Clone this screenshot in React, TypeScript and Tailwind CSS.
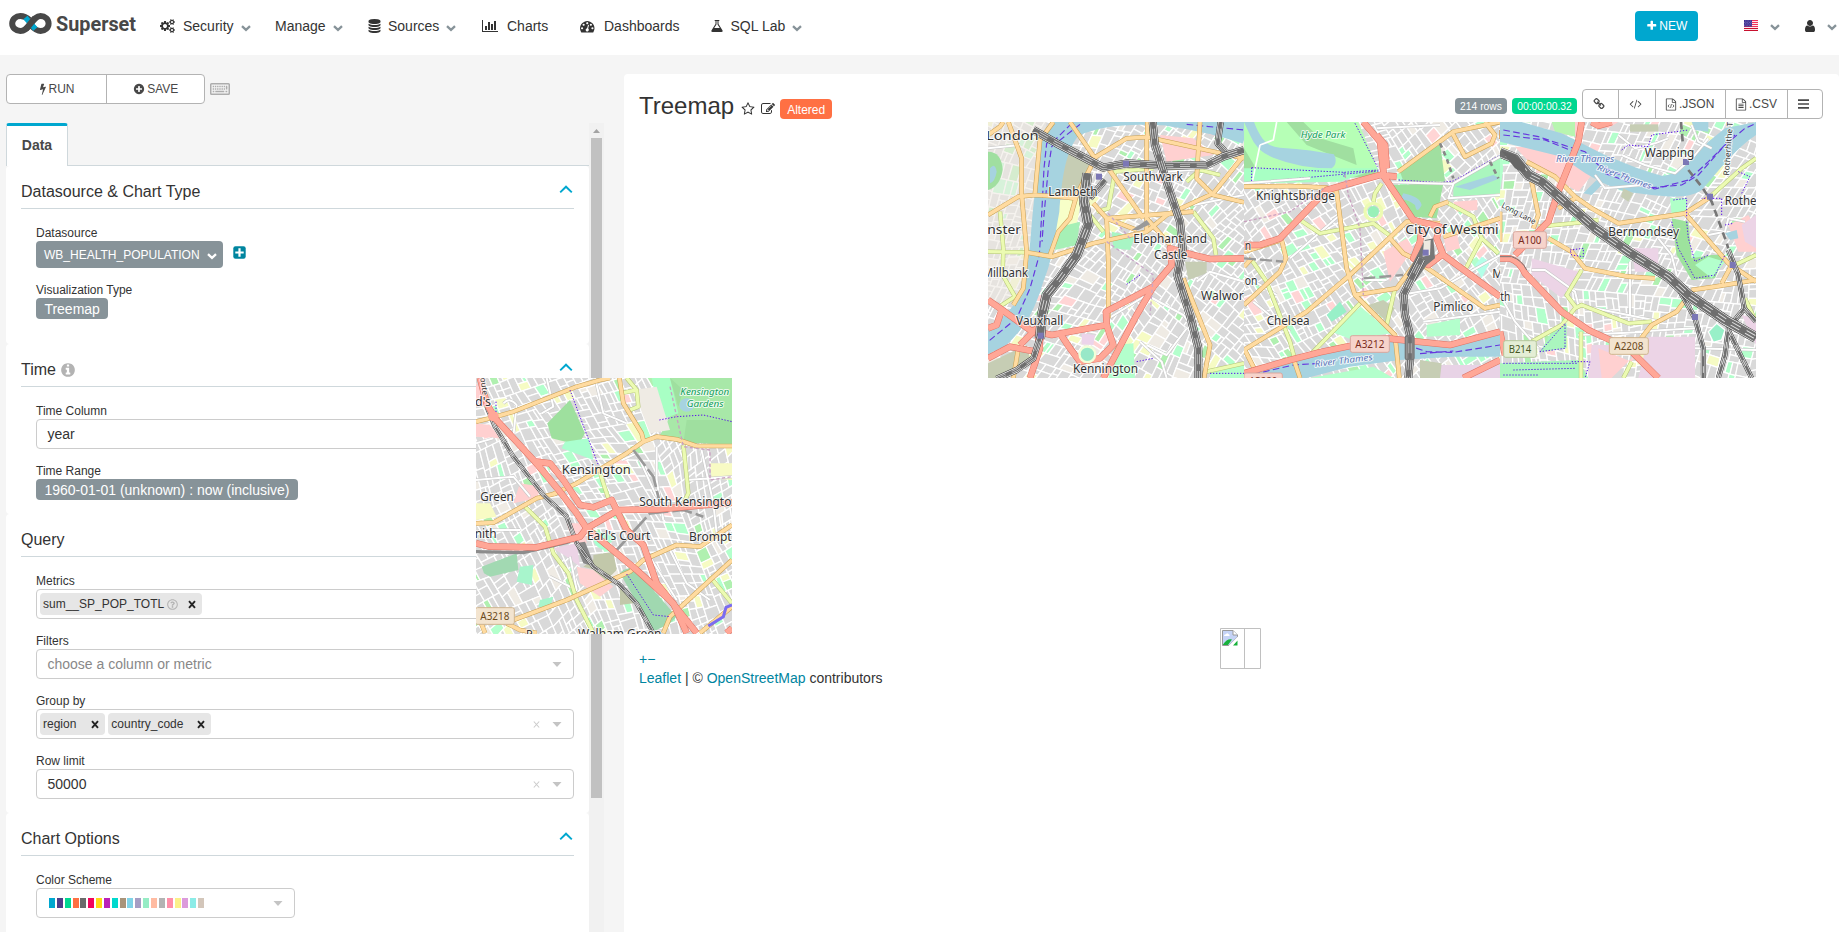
import React from "react";
import { FaRegQuestionCircle } from "react-icons/fa";

/* ---------- icons ---------- */

const PATHS = {
  cogs: "M896 896q0-106-75-181t-181-75-181 75-75 181 75 181 181 75 181-75 75-181zm768 512q0-52-38-90t-90-38-90 38-38 90q0 53 37.5 90.5t90.5 37.5 90.5-37.5 37.5-90.5zm0-1024q0-52-38-90t-90-38-90 38-38 90q0 53 37.5 90.5t90.5 37.5 90.5-37.5 37.5-90.5zm-384 421v185q0 10-7 19.5t-16 10.5l-155 24q-11 35-32 76 34 48 90 115 7 11 7 20 0 12-7 19-23 30-82.5 89.5t-78.5 59.5q-11 0-21-7l-115-90q-37 19-77 31-11 108-23 155-7 24-30 24h-186q-11 0-20-7.5t-10-17.5l-23-153q-34-10-75-31l-118 89q-7 7-20 7-11 0-21-8-144-133-144-160 0-9 7-19 10-14 41-53t47-61q-23-44-35-82l-152-24q-10-1-17-9.5t-7-19.5v-185q0-10 7-19.5t16-10.5l155-24q11-35 32-76-34-48-90-115-7-11-7-20 0-12 7-20 22-30 82-89t79-59q11 0 21 7l115 90q34-18 77-32 11-108 23-154 7-24 30-24h186q11 0 20 7.5t10 17.5l23 153q34 10 75 31l118-89q8-7 20-7 11 0 21 8 144 133 144 160 0 8-7 19-12 16-42 54t-45 60q23 48 34 82l152 23q10 2 17 10.5t7 19.5zm640 533v140q0 16-149 31-12 27-30 52 51 113 51 138 0 4-4 7-122 71-124 71-8 0-46-47t-52-68q-20 2-30 2t-30-2q-14 21-52 68t-46 47q-2 0-124-71-4-3-4-7 0-25 51-138-18-25-30-52-149-15-149-31v-140q0-16 149-31 13-29 30-52-51-113-51-138 0-4 4-7 4-2 35-20t59-34 30-16q8 0 46 46.5t52 67.5q20-2 30-2t30 2q51-71 92-112l6-2q4 0 124 70 4 3 4 7 0 25-51 138 17 23 30 52 149 15 149 31zm0-1024v140q0 16-149 31-12 27-30 52 51 113 51 138 0 4-4 7-122 71-124 71-8 0-46-47t-52-68q-20 2-30 2t-30-2q-14 21-52 68t-46 47q-2 0-124-71-4-3-4-7 0-25 51-138-18-25-30-52-149-15-149-31v-140q0-16 149-31 13-29 30-52-51-113-51-138 0-4 4-7 4-2 35-20t59-34 30-16q8 0 46 46.5t52 67.5q20-2 30-2t30 2q51-71 92-112l6-2q4 0 124 70 4 3 4 7 0 25-51 138 17 23 30 52 149 15 149 31z",
  database: "M832 768q237 0 443-43t325-127v170q0 69-103 128t-280 93.5-385 34.5-385-34.5-280-93.5-103-128v-170q119 84 325 127t443 43zm0 768q237 0 443-43t325-127v170q0 69-103 128t-280 93.5-385 34.5-385-34.5-280-93.5-103-128v-170q119 84 325 127t443 43zm0-384q237 0 443-43t325-127v170q0 69-103 128t-280 93.5-385 34.5-385-34.5-280-93.5-103-128v-170q119 84 325 127t443 43zm0-1152q208 0 385 34.5t280 93.5 103 128v128q0 69-103 128t-280 93.5-385 34.5-385-34.5-280-93.5-103-128v-128q0-69 103-128t280-93.5 385-34.5z",
  chart: "M640 896v512h-256v-512h256zm384-512v1024h-256v-1024h256zm1024 1152v128h-2048v-1536h128v1408h1920zm-640-896v768h-256v-768h256zm384-384v1152h-256v-1152h256z",
  gauge: "M384 1152q0-53-37.5-90.5t-90.5-37.5-90.5 37.5-37.5 90.5 37.5 90.5 90.5 37.5 90.5-37.5 37.5-90.5zm192-448q0-53-37.5-90.5t-90.5-37.5-90.5 37.5-37.5 90.5 37.5 90.5 90.5 37.5 90.5-37.5 37.5-90.5zm428 481l101-382q6-26-7.5-48.5t-38.5-29.5-48 6.5-30 39.5l-101 382q-60 5-107 43.5t-63 98.5q-20 77 20 146t117 89 146-20 89-117q16-60-6-117t-72-91zm660-33q0-53-37.5-90.5t-90.5-37.5-90.5 37.5-37.5 90.5 37.5 90.5 90.5 37.5 90.5-37.5 37.5-90.5zm-640-640q0-53-37.5-90.5t-90.5-37.5-90.5 37.5-37.5 90.5 37.5 90.5 90.5 37.5 90.5-37.5 37.5-90.5zm448 192q0-53-37.5-90.5t-90.5-37.5-90.5 37.5-37.5 90.5 37.5 90.5 90.5 37.5 90.5-37.5 37.5-90.5zm320 448q0 261-141 483-19 29-54 29h-1402q-35 0-54-29-141-221-141-483 0-182 71-348t191-286 286-191 348-71 348 71 286 191 191 286 71 348z",
  flask: "M1591 1448q56 89 21.5 152.5t-140.5 63.5h-1152q-106 0-140.5-63.5t21.5-152.5l503-793v-399h-64q-26 0-45-19t-19-45 19-45 45-19h512q26 0 45 19t19 45-19 45-45 19h-64v399zm-779-725l-272 429h712l-272-429-20-31v-436h-128v436z",
  star: "M1201 1004l306-297-422-62-189-382-189 382-422 62 306 297-73 421 378-199 377 199zm527-357q0 22-26 48l-363 354 86 500q1 7 1 20 0 50-41 50-19 0-40-12l-449-236-449 236q-22 12-40 12-21 0-31.5-14.5t-10.5-35.5q0-6 2-20l86-500-364-354q-25-27-25-48 0-37 56-46l502-73 225-455q19-41 49-41t49 41l225 455 502 73q56 9 56 46z",
  edit: "M888 1184l116-116-152-152-116 116v56h96v96h56zm440-720q-16-16-33 1l-350 350q-17 17-1 33t33-1l350-350q17-17 1-33zm80 594v190q0 119-84.5 203.5t-203.5 84.5h-832q-119 0-203.5-84.5t-84.5-203.5v-832q0-119 84.5-203.5t203.5-84.5h832q63 0 117 25 15 7 18 23 3 17-9 29l-49 49q-14 14-32 8-23-6-45-6h-832q-66 0-113 47t-47 113v832q0 66 47 113t113 47h832q66 0 113-47t47-113v-126q0-13 9-22l64-64q15-15 35-7t20 29zm-96-738l288 288-672 672h-288v-288zm444 132l-92 92-288-288 92-92q28-28 68-28t68 28l152 152q28 28 28 68t-28 68z",
  bolt: "M1333 566q18 20 7 44l-540 1157q-13 25-42 25-4 0-14-2-17-5-25.5-19t-4.5-30l197-808-406 101q-4 1-12 1-18 0-31-11-18-15-13-39l201-825q4-14 16-23t28-9h328q19 0 32 12.5t13 29.5q0 8-5 18l-171 463 396-98q8-2 12-2 19 0 34 15z",
  plusCircle: "M1344 960v-128q0-26-19-45t-45-19h-256v-256q0-26-19-45t-45-19h-128q-26 0-45 19t-19 45v256h-256q-26 0-45 19t-19 45v128q0 26 19 45t45 19h256v256q0 26 19 45t45 19h128q26 0 45-19t19-45v-256h256q26 0 45-19t19-45zm320-64q0 209-103 385.5t-279.5 279.5-385.5 103-385.5-103-279.5-279.5-103-385.5 103-385.5 279.5-279.5 385.5-103 385.5 103 279.5 279.5 103 385.5z",
  plus: "M1600 736v192q0 40-28 68t-68 28h-416v416q0 40-28 68t-68 28h-192q-40 0-68-28t-28-68v-416h-416q-40 0-68-28t-28-68v-192q0-40 28-68t68-28h416v-416q0-40 28-68t68-28h192q40 0 68 28t28 68v416h416q40 0 68 28t28 68z",
  info: "M1152 1376v-160q0-14-9-23t-23-9h-96v-512q0-14-9-23t-23-9h-320q-14 0-23 9t-9 23v160q0 14 9 23t23 9h96v320h-96q-14 0-23 9t-9 23v160q0 14 9 23t23 9h448q14 0 23-9t9-23zm-128-896v-160q0-14-9-23t-23-9h-192q-14 0-23 9t-9 23v160q0 14 9 23t23 9h192q14 0 23-9t9-23zm640 416q0 209-103 385.5t-279.5 279.5-385.5 103-385.5-103-279.5-279.5-103-385.5 103-385.5 279.5-279.5 385.5-103 385.5 103 279.5 279.5 103 385.5z",
  code: "M681 1399l-50 50q-10 10-23 10t-23-10l-466-466q-10-10-10-23t10-23l466-466q10-10 23-10t23 10l50 50q10 10 10 23t-10 23l-393 393 393 393q10 10 10 23t-10 23zm591-1067l-373 1291q-4 13-15.5 19.5t-23.5 2.5l-62-17q-13-4-19.5-15.5t-2.5-24.5l373-1291q4-13 15.5-19.5t23.5-2.5l62 17q13 4 19.5 15.5t2.5 24.5zm657 651l-466 466q-10 10-23 10t-23-10l-50-50q-10-10-10-23t10-23l393-393-393-393q-10-10-10-23t10-23l50-50q10-10 23-10t23 10l466 466q10 10 10 23t-10 23z",
  user: "M1536 1399q0 109-62.5 187t-150.5 78h-854q-88 0-150.5-78t-62.5-187q0-85 8.5-160.5t31.5-152 58.5-131 94-89 134.5-34.5q131 128 313 128t313-128q76 0 134.5 34.5t94 89 58.5 131 31.5 152 8.5 160.5zm-256-887q0 159-112.5 271.5t-271.5 112.5-271.5-112.5-112.5-271.5 112.5-271.5 271.5-112.5 271.5 112.5 112.5 271.5z",
  link: "M1520 1216q0-40-28-68l-208-208q-28-28-68-28-42 0-72 32 3 3 19 18.5t21.5 21.5 15 19 13 25.5 3.5 27.5q0 40-28 68t-68 28q-15 0-27.5-3.5t-25.5-13-19-15-21.5-21.5-18.5-19q-33 31-33 73 0 40 28 68l206 207q27 27 68 27 40 0 68-26l147-146q28-28 28-67zm-703-705q0-40-28-68l-206-207q-28-28-68-28-39 0-68 27l-147 146q-28 28-28 67 0 40 28 68l208 208q27 27 68 27 42 0 72-31-3-3-19-18.5t-21.5-21.5-15-19-13-25.5-3.5-27.5q0-40 28-68t68-28q15 0 27.5 3.5t25.5 13 19 15 21.5 21.5 18.5 19q33-31 33-73zm895 705q0 120-85 203l-147 146q-83 83-203 83-121 0-204-85l-206-207q-83-83-83-203 0-123 88-209l-88-88q-86 88-208 88-120 0-204-84l-208-208q-84-84-84-204t85-203l147-146q83-83 203-83 121 0 204 85l206 207q83 83 83 203 0 123-88 209l88 88q86-88 208-88 120 0 204 84l208 208q84 84 84 204z",
  file: "M1596 380q28 28 48 76t20 88v1152q0 40-28 68t-68 28h-1344q-40 0-68-28t-28-68v-1600q0-40 28-68t68-28h896q40 0 88 20t76 48zm-444-244v376h376q-10-29-22-41l-313-313q-12-12-41-22zm384 1528v-1024h-416q-40 0-68-28t-28-68v-416h-768v1536h1280z",
};

function Icon({ name, size, w = 1792, className = "" }: { name: keyof typeof PATHS; size: number; w?: number; className?: string }) {
  return (
    <svg width={(size * w) / 1792} height={size} viewBox={`0 0 ${w} 1792`} fill="currentColor" className={`shrink-0 ${className}`}>
      <path d={PATHS[name]} />
    </svg>
  );
}

const Caret = ({ className = "" }: { className?: string }) => (
  <svg width="10" height="7" viewBox="0 0 10 7" className={`shrink-0 ${className}`}>
    <path d="M1 1.2L5 4.9L9 1.2" fill="none" stroke="currentColor" strokeWidth="2.3" />
  </svg>
);

const Arrow = ({ className = "" }: { className?: string }) => (
  <svg width="10" height="5" viewBox="0 0 10 5" className={`shrink-0 ${className}`}>
    <path d="M0.5 0H9.5L5 5Z" fill="#c4c4c4" />
  </svg>
);

const FileIcon = ({ code }: { code?: boolean }) => (
  <svg width="12" height="13" viewBox="0 0 1792 1792" fill="currentColor" className="shrink-0">
    <path d={PATHS.file} />
    {code ? (
      <path d="M640 900L450 1120L640 1340M1152 900L1342 1120L1152 1340M960 830L832 1410" fill="none" stroke="currentColor" strokeWidth="120" />
    ) : (
      <path d="M512 770h768v120h-768zM512 1025h768v120h-768zM512 1280h768v120h-768z" />
    )}
  </svg>
);

const Keyboard = () => (
  <svg width="20" height="12" viewBox="0 0 20 12" className="shrink-0">
    <rect x="0.75" y="0.75" width="18.5" height="10.5" rx="0.8" fill="#f5f5f5" stroke="#adadad" strokeWidth="1.5" />
    <path d="M2.7 3.5H17.3M2.7 5.9H15" stroke="#adadad" strokeWidth="1.5" strokeDasharray="1.4 0.8" />
    <path d="M2.7 8.5H4.3M5.3 8.5H14.3M15.5 8.5H17.3M16.6 4V6.6" stroke="#adadad" strokeWidth="1.5" />
  </svg>
);

const Flag = () => (
  <svg width="14" height="11" viewBox="0 0 14 11" className="shrink-0">
    <rect width="14" height="11" fill="#fff" />
    {[0, 2, 4, 6, 8, 10].map((y) => (
      <rect key={y} y={y} width="14" height="1.1" fill={y > 6 ? "#c8102e" : "#f0305a"} />
    ))}
    <rect width="8" height="6.6" fill="#3c2f91" />
    <path d="M1 1H8M0 2.4H8M1 3.8H8M0 5.2H8" stroke="#a9a2d8" strokeWidth="0.6" strokeDasharray="0.8 0.9" />
  </svg>
);

const Logo = () => (
  <svg width="130" height="30" viewBox="0 0 130 30" className="shrink-0">
    <g fill="none" strokeWidth="6">
      <path d="M20.5 10C17 6.6 14 6 11.3 6C6.8 6 3.2 9.3 3.2 13.5S6.8 21 11.3 21C15.8 21 18 18.2 21.2 14.5" stroke="#484848" />
      <path d="M21.2 14.5C24.6 10 27 6 31.6 6C36 6 39.6 9.3 39.6 13.5S36 21 31.6 21C28 21 25 18.6 21.8 15.2" stroke="#484848" />
      <path d="M16.4 7.4L26.4 19" stroke="#00a7cf" strokeWidth="5.4" />
      <path d="M17 19L26 8" stroke="#484848" />
    </g>
    <text x="47" y="21" fontFamily="Roboto, 'Liberation Sans', sans-serif" fontWeight="700" fontSize="20.5" textLength="80" lengthAdjust="spacingAndGlyphs" fill="#484848">
      Superset
    </text>
  </svg>
);

/* ---------- street map tiles ---------- */

type Pt = [number, number];

function random(seed: number) {
  let s = seed;
  return () => {
    s = (s * 1664525 + 1013904223) % 4294967296;
    return s / 4294967296;
  };
}

const area = (p: Pt[]) =>
  Math.abs(p.reduce((t, a, i) => { const b = p[(i + 1) % p.length]; return t + a[0] * b[1] - b[0] * a[1]; }, 0)) / 2;

/* Splits a quad into irregular city blocks by cutting its longer pair of sides. */
function splitBlocks(q: Pt[], rnd: () => number, out: Pt[][]) {
  const size = area(q);
  if (size < 550 + rnd() * 1400) {
    out.push(q);
    return;
  }
  const len = (a: Pt, b: Pt) => Math.hypot(a[0] - b[0], a[1] - b[1]);
  const mix = (a: Pt, b: Pt, t: number): Pt => [a[0] + (b[0] - a[0]) * t, a[1] + (b[1] - a[1]) * t];
  const [a, b, c, d] = q;
  const wide = len(a, b) + len(c, d) > (len(b, c) + len(d, a)) * (0.55 + rnd() * 0.5);
  const t = 0.34 + rnd() * 0.32;
  const skew = size > 20000 ? 0.34 : 0.08;
  const u = t + (rnd() - 0.5) * skew;
  if (wide) {
    const m = mix(a, b, t), n = mix(d, c, u);
    splitBlocks([a, m, n, d], rnd, out);
    splitBlocks([m, b, c, n], rnd, out);
  } else {
    const m = mix(b, c, t), n = mix(a, d, u);
    splitBlocks([a, b, m, n], rnd, out);
    splitBlocks([n, m, c, d], rnd, out);
  }
}

function Blocks({ seed, angle }: { seed: number; angle: number }) {
  const rnd = random(seed);
  const out: Pt[][] = [];
  splitBlocks([[-170, -170], [960, -170], [960, 960], [-170, 960]], rnd, out);
  const fills = out.map(() => {
    const r = rnd();
    return r < 0.06 ? "#b3ffcc" : r < 0.1 ? "#f6fbc4" : r < 0.12 ? "#ffd5d5" : r < 0.15 ? "#b0f0b0" : r < 0.21 ? "#efebe4" : "#d9d9d9";
  });
  return (
    <g transform={`rotate(${angle} 400 400)`} stroke="#fff" strokeWidth="3.8">
      {out.map((p, i) => (
        <polygon key={i} points={p.map((v) => `${v[0].toFixed(1)},${v[1].toFixed(1)}`).join(" ")} fill={fills[i]} />
      ))}
    </g>
  );
}

type RoadKind = "red" | "orange" | "yellow" | "white";
const ROAD: Record<RoadKind, { edge: string; fill: string; w: number }> = {
  white: { edge: "#c4c4c4", fill: "#ffffff", w: 6 },
  yellow: { edge: "#b3c475", fill: "#ecfbb2", w: 10 },
  orange: { edge: "#c9a052", fill: "#ffdba0", w: 11 },
  red: { edge: "#dd6f62", fill: "#ffa797", w: 17 },
};

function Roads({ kind, lines }: { kind: RoadKind; lines: string[] }) {
  const r = ROAD[kind];
  return (
    <g fill="none" strokeLinejoin="round">
      {lines.map((d, i) => <path key={i} d={d} stroke={r.edge} strokeWidth={r.w + 3} />)}
      {lines.map((d, i) => <path key={i} d={d} stroke={r.fill} strokeWidth={r.w} />)}
    </g>
  );
}

function Rails({ lines, w = 22 }: { lines: string[]; w?: number }) {
  return (
    <g fill="none" strokeLinejoin="round">
      {lines.map((d, i) => (
        <g key={i}>
          <path d={d} stroke="#333" strokeWidth={w + 2} />
          <path d={d} stroke="#f2f2f2" strokeWidth={w - 1} />
          <path d={d} stroke="#6e6e6e" strokeWidth={w - 5} />
          {w > 14 && <path d={d} stroke="#e0e0e0" strokeWidth={w * 0.4} />}
          {w > 14 && <path d={d} stroke="#6e6e6e" strokeWidth={w * 0.22} />}
          <path d={d} stroke={w > 14 ? "#6e6e6e" : "#ddd"} strokeWidth={w > 14 ? w * 0.5 : 3} strokeDasharray="20 30" />
        </g>
      ))}
    </g>
  );
}

const Dots = ({ d, w = 3 }: { d: string; w?: number }) => (
  <path d={d} fill="none" stroke="#5b12ea" strokeWidth={w} strokeDasharray="4 5" />
);

const Ferry = ({ d }: { d: string }) => (
  <path d={d} fill="none" stroke="#6636dd" strokeWidth="3.5" strokeDasharray="20 10" />
);

function Name({ x, y, w, s = 36, children, fill = "#333", italic = false, transform }: { x: number; y: number; w: number; s?: number; children: string; fill?: string; italic?: boolean; transform?: string }) {
  return (
    <text x={x} y={y} textLength={w} lengthAdjust="spacingAndGlyphs" fontSize={s} fill={fill} stroke="#fff" strokeOpacity="0.75" strokeWidth="6" strokeLinejoin="round" paintOrder="stroke" fontStyle={italic ? "italic" : "normal"} transform={transform}>
      {children}
    </text>
  );
}

function Shield({ x, y, w, children, bg, edge, ink }: { x: number; y: number; w: number; children: string; bg: string; edge: string; ink: string }) {
  return (
    <g>
      <rect x={x} y={y} width={w} height="50" rx="6" fill={bg} stroke={edge} strokeWidth="3" />
      <text x={x + 15} y={y + 36} textLength={w - 30} lengthAdjust="spacingAndGlyphs" fontSize="31" fill={ink}>{children}</text>
    </g>
  );
}

function Tile({ box, className, children }: { box: string; className: string; children: React.ReactNode }) {
  return (
    <svg width="256" height="256" viewBox={box} fontFamily="'Noto Sans', sans-serif" className={`absolute overflow-hidden ${className}`}>
      <rect width="900" height="900" fill="#dcdcdc" />
      {children}
    </svg>
  );
}

const Stations = ({ at }: { at: Pt[] }) => (
  <g fill="#7b77b5">{at.map(([x, y]) => <rect key={`${x}-${y}`} x={x - 9} y={y - 9} width="18" height="18" />)}</g>
);

const LambethTile = () => (
  <Tile box="24 21 768 768" className="left-[364px] top-[48px]">
    <Blocks seed={11} angle={24} />
    <path d="M24 21H200L170 200L150 400L120 560L24 560Z" fill="#eeeae2" opacity="0.6" />
    <path d="M24 110Q65 110 68 165Q60 215 24 225Z" fill="#a0dfa0" />
    <path d="M30 160Q45 140 50 170Q45 200 30 205Z" fill="#a6d3e0" />
    <path d="M270 90L330 130L310 240L240 255L235 150Z" fill="#c6cdb4" />
    <path d="M240 255L305 250L290 330L220 350Z" fill="#f7ffc8" />
    <path d="M240 335L300 320L290 390L225 405Z" fill="#a6f0b6" />
    <path d="M395 350L465 365L450 405L400 400Z" fill="#a8f5c4" />
    <path d="M540 60L640 70L700 120L560 140ZM640 21L792 21V70L690 60Z" fill="#ffd0d0" />
    <path d="M615 440L680 440L680 475L625 495Z" fill="#c6cdb4" />
    <path d="M405 690L460 685L465 789H385Z" fill="#b3ffcc" />
    <path d="M690 765L792 740V789H690Z" fill="#b3ffcc" />
    <path d="M305 655L345 660L340 690L305 688Z" fill="#ecd4ea" />
    <path d="M24 745L140 690L150 730L70 789H24Z" fill="#c6cdb4" />
    <path d="M215 21L792 21L792 75Q700 34 520 30Q380 24 295 62C255 110 245 200 238 290C218 400 218 430 190 500C160 600 130 640 80 690L24 718V640C90 590 112 570 132 500C152 430 152 330 165 230C172 130 180 70 215 21Z" fill="#a6d3e0" />
    <path d="M560 21Q690 40 792 75" stroke="#a6d3e0" strokeWidth="22" fill="none" />
    <Ferry d="M275 25L230 70L200 85L192 160L185 300L178 420L150 520L110 610L24 680" />
    <Ferry d="M300 28L215 95L205 160L192 300L186 380M620 28L792 45" />
    <Roads kind="white" lines={["M370 620L500 540L610 600L640 640M500 690L560 720L620 640M650 500L690 470L792 500M480 680L545 740L560 789M24 100L120 90M560 170L700 160M640 270L792 240"]} />
    <Roads kind="yellow" lines={["M24 410L140 412M60 290L70 400L68 480L105 545L50 580M350 290L385 280L405 170L520 160M640 290L700 370L708 420M792 745L680 770M620 200L660 165L720 180M370 350L330 300"]} />
    <Roads kind="orange" lines={[
      "M85 21L125 130V240L140 410L130 520L100 570", "M220 21L180 75L165 235", "M24 300L115 245L165 240L240 245L285 250", "M270 21L345 130L290 240L270 310L235 350L210 420",
      "M140 412L215 425L340 385L500 350L560 300L700 235L792 120", "M340 130L440 70L500 66L792 130", "M502 66V21M500 66V350", "M385 160L490 310", "M340 265L380 310L640 290", "M380 310L385 440V610",
      "M500 310L570 390M660 21L650 190L700 240L792 262", "M610 490L650 590L690 690L672 789", "M24 60L60 35L70 21M115 700L100 789M380 310L470 345",
    ]} />
    <Roads kind="red" lines={["M24 555L60 580L150 645L215 660L380 630L378 590L520 515L575 450L570 400L640 420L690 432L792 430", "M520 515L470 600L370 789", "M24 730L90 695L170 710L185 660M24 640L50 630L65 585", "M240 655L270 700L300 740L360 730L400 690L380 630", "M150 789L180 700L170 640L120 690"]} />
    <circle cx="322" cy="718" r="27" fill="#f2ffd9" /><circle cx="322" cy="718" r="20" fill="#98e8c8" />
    <path d="M455 345L500 315L510 328L475 345Z" fill="#999" />
    <Rails w={28} lines={["M322 175L312 260L325 330L290 420L240 490L200 540L186 600L180 670"]} />
    <Rails w={17} lines={["M182 660L160 730L110 765L50 792", "M375 195L330 250", "M722 21L713 85L740 115"]} />
    <Rails lines={["M160 45L230 85L370 158L440 145L560 152L680 150L730 125L792 105", "M518 21L525 90L560 200L600 320L608 400L592 480L630 600L655 700V789"]} />
    <Dots d="M440 508L480 480M690 775H792M470 740L520 730" />
    <path d="M380 380L520 480L510 600M450 370L380 290" fill="none" stroke="#c9a8c9" strokeWidth="4" strokeDasharray="10 8" />
    <Stations at={[[438, 146], [357, 185], [182, 662]]} />
    <Name x={18} y={76} w={158} s={39}>London</Name>
    <Name x={205} y={243} w={148}>Lambeth</Name>
    <Name x={430} y={198} w={178}>Southwark</Name>
    <Name x={22} y={357} w={101} s={39}>nster</Name>
    <Name x={8} y={487} w={136}>Millbank</Name>
    <Name x={460} y={385} w={221}>Elephant and</Name>
    <Name x={522} y={431} w={100}>Castle</Name>
    <Name x={663} y={556} w={128}>Walwor</Name>
    <Name x={108} y={630} w={142}>Vauxhall</Name>
    <Name x={279} y={773} w={195}>Kennington</Name>
  </Tile>
);

const WestminsterTile = () => (
  <Tile box="12 21 768 768" className="left-[620px] top-[48px]">
    <Blocks seed={77} angle={-32} />
    <path d="M12 21H355L415 165L12 205Z" fill="#b6ffb6" />
    <path d="M12 100L60 180H12ZM140 21L200 90L250 110L350 150L340 100L240 70L190 21ZM120 160L250 165L410 165L400 185L130 195Z" fill="#a0dfa0" />
    <path d="M12 160H415L300 200L12 205Z" fill="#a8ffc4" />
    <path d="M12 21H42C65 80 85 95 120 98Q220 105 282 118Q295 145 275 160Q180 160 100 128Q50 110 30 60Z" fill="#a6d3e0" />
    <path d="M480 170L600 80L615 200L490 198Z" fill="#a0dfa0" />
    <path d="M455 210L610 205L590 310L520 305Z" fill="#9fe29f" />
    <path d="M490 235Q540 245 545 270Q530 300 525 270Q500 250 480 255Z" fill="#a6d3e0" />
    <path d="M640 210L780 120V235L640 255Z" fill="#aaf6be" /><path d="M645 215L760 180L780 190L690 225Z" fill="#a6d3e0" />
    <path d="M430 410L500 370L520 400L450 500ZM610 365L650 350L660 400L620 410ZM640 260L712 255V285L650 290Z" fill="#ffd0d0" />
    <path d="M362 575L455 655L330 672L275 650Z" fill="#b6ffd0" /><path d="M260 600L300 560L320 590L275 620Z" fill="#98f0c8" />
    <path d="M385 570L430 555L465 580L440 620Z" fill="#c6cdb4" />
    <path d="M705 450L725 425L750 440L725 490Z" fill="#b3ffe8" />
    <path d="M560 630L660 610V660L560 665Z" fill="#b3ffcc" />
    <path d="M600 750H780V789H600Z" fill="#e8d3e6" /><path d="M540 735L605 745L600 789H540Z" fill="#c6cdb4" />
    <path d="M60 90L35 210M110 21L100 75L60 90" stroke="#fff" strokeWidth="5" fill="none" />
    <Dots d="M35 158L312 172L415 165M35 158V203L415 168M312 172V190M345 25L412 155M476 195L600 203L640 198L780 120" />
    <path d="M12 775L240 710L460 670L640 690L780 650V725L640 725L480 735L330 755L200 789H12Z" fill="#a6d3e0" />
    <path d="M210 789L400 755L460 789Z" fill="#b3ffcc" />
    <Ferry d="M40 778L160 750L240 745M500 690L560 710L640 712L780 690M540 716L640 708" />
    <Roads kind="white" lines={["M455 202L640 207L625 250L780 240M640 205L780 125M410 40L600 30M12 205L210 190M150 430L300 300M350 480L380 495H440M550 620L780 590", "M550 400L480 540L600 520L780 420M40 560L150 650M12 480L110 540"]} />
    <Roads kind="yellow" lines={["M185 318L240 355L400 325L460 370M425 205L405 235L400 260M35 435L80 500L150 680L165 735M215 715L365 560M465 520L440 630M620 262L700 305L725 370L675 465M725 370L775 415"]} />
    <circle cx="400" cy="290" r="25" fill="none" stroke="#ecfbb2" strokeWidth="10" /><circle cx="400" cy="290" r="17" fill="#98f0b8" />
    <Roads kind="orange" lines={["M12 215L150 213L260 218L290 230L320 460L345 540L465 660L478 789", "M12 570L120 470L138 430L125 375L12 410M12 455L35 430", "M12 705L200 590L330 480L500 320L600 325", "M450 370L490 415L520 430L735 580L780 570", "M345 540L470 520L530 440M12 700L45 765", "M475 170L640 50L780 21M635 50L675 125L755 85L765 60L735 21M570 305L585 275L625 260M610 365L780 310", "M160 730L180 789"]} />
    <Roads kind="red" lines={["M12 390H60L120 370L260 225L420 180L470 185M370 21L420 80L432 185L520 315L600 335L590 370L610 420L780 545M545 340L540 380L520 430L565 450L605 420M440 160L435 90L410 60", "M12 775L150 735L240 712L440 670L630 690L780 650M670 789L780 735"]} />
    <path d="M555 375L580 370L585 430L560 450L525 500L500 480Z" fill="#777" /><path d="M552 378L572 375L570 420L548 425Z" fill="#eeeae2" />
    <Rails w={22} lines={["M545 430L515 490L490 540L495 600L510 660V730L505 789"]} />
    <rect x="496" y="663" width="26" height="70" rx="4" fill="none" stroke="#777" strokeWidth="4" />
    <path d="M12 430L130 440M370 490L490 480" stroke="#999" strokeWidth="7" strokeDasharray="36 12" fill="none" />
    <path d="M600 85L620 130L640 190M750 140L775 190" stroke="#888" strokeWidth="8" strokeDasharray="14 12" fill="none" />
    <path d="M315 180L325 240L360 340L370 540M12 320L150 290L250 220" fill="none" stroke="#c9a0c0" strokeWidth="4" strokeDasharray="9 6" />
    <Stations at={[[557, 413]]} />
    <Name x={182} y={68} w={134} s={28} fill="#13a05c" italic>Hyde Park</Name>
    <Name x={48} y={256} w={237}>Knightsbridge</Name>
    <Name x={496} y={357} w={280} s={40}>City of Westmi</Name>
    <Name x={14} y={404} w={19}>n</Name>
    <Name x={14} y={509} w={38}>on</Name>
    <Name x={80} y={629} w={129}>Chelsea</Name>
    <Name x={580} y={587} w={120}>Pimlico</Name>
    <Name x={757} y={488} w={32}>M</Name>
    <Name x={776} y={73} w={14}>L</Name>
    <Name x={225} y={756} w={175} s={26} fill="#5a75b8" italic transform="rotate(-7 225 756)">River Thames</Name>
    <Shield x={331} y={662} w={117} bg="#f6d3cb" edge="#d9a79e" ink="#7a2b20">A3212</Shield>
    <Shield x={12} y={774} w={115} bg="#f6d3cb" edge="#d9a79e" ink="#7a2b20">A3220</Shield>
  </Tile>
);

const BermondseyTile = () => (
  <Tile box="15 21 768 768" className="left-[876px] top-[48px]">
    <Blocks seed={305} angle={14} />
    <path d="M60 95L190 100L290 180L250 230L110 150ZM180 21H250V60L190 55ZM300 21H370L340 40ZM700 330L760 300L783 340V410H730Z" fill="#ffd0d0" />
    <path d="M170 21H240V65L180 50Z" fill="#b8f5b0" />
    <path d="M405 28H490V50H405Z" fill="#c6cdb4" />
    <path d="M110 430L250 470L200 550L110 480ZM410 400H490V470H420ZM460 665H600V789H430ZM290 690H350L340 789H280ZM740 330L783 300V400L750 380ZM740 600L783 610V690Z" fill="#ecd4e6" />
    <path d="M310 700L410 740L430 710L350 789H320Z" fill="#ffd0d0" />
    <path d="M530 310L580 320L590 430L650 420L690 420L660 490L590 495L545 420Z" fill="#9de29d" /><path d="M600 450L640 425L690 440L650 490Z" fill="#b3ffcc" />
    <path d="M525 250H575V300H530Z" fill="#b0ffc8" />
    <path d="M15 745L250 735L280 789H15ZM175 640L215 625V700L135 712Z" fill="#aaf6be" />
    <path d="M15 100V230L25 160ZM15 21L30 90L15 90Z" fill="#b3ffcc" />
    <path d="M15 21H80L200 55L330 120C380 140 420 160 500 182C560 180 590 130 640 80L690 40L783 21V60C720 100 670 170 620 225C570 260 480 240 400 232C330 215 260 170 200 125L15 80Z" fill="#a6d3e0" />
    <path d="M310 190L265 235L290 240L335 195ZM590 21H640V50L600 45Z" fill="#a6d3e0" />
    <path d="M385 220L415 235L400 260L378 245Z" fill="#c6cdb4" />
    <Ferry d="M25 45L130 65L220 95L270 110L310 150L400 190L470 218L560 210L610 180L690 90L750 40L783 25M25 60L150 75L250 115" />
    <Ferry d="M330 175L420 208L480 222L580 195L640 140L720 60" />
    <Roads kind="white" lines={["M370 60L420 100L480 85L520 70M380 120L450 150L540 175L600 120L640 70M590 30L610 80L650 100M15 540L60 620L130 700M110 465H150L240 530L250 570L500 620M405 440V600M420 650L600 640M250 660L460 650M640 360L690 350L700 310L750 320M490 370L530 420L545 480M600 700L783 705M300 180L330 220L440 210"]} />
    <Roads kind="yellow" lines={["M783 130L740 160L640 250M130 335L230 325L310 315M110 680L200 630L240 580L260 570L400 625L470 620M260 465L215 540L245 580M258 650V789M385 789L410 740M783 420L720 450M750 550L783 620"]} />
    <Roads kind="orange" lines={["M95 140L180 185L240 245L290 280L370 325L570 295L640 250M570 295L700 445L783 500", "M240 250L190 280M110 200L130 300L115 340M160 370L230 410L270 460L400 485L480 490M15 290V380", "M590 525L660 515L783 495M680 505L710 450M415 700L470 630L545 590L590 530"]} />
    <Roads kind="red" lines={["M260 21L250 80L190 230L160 320L60 420M15 430H45Q75 440 90 475L200 590L280 645L400 700L490 789", "M15 650L30 720M290 21L310 32L350 21"]} />
    <path d="M15 425H50Q80 435 95 465" fill="none" stroke="#777" strokeWidth="3" />
    <Rails w={13} lines={["M700 405L730 480L748 580L700 640L690 720L670 789M748 580L783 620M700 645L770 789", "M550 520L600 610L625 700V789"]} />
    <Rails w={30} lines={["M15 112L60 130L100 180L140 200L300 340L400 410L520 485L580 540L690 615L783 668"]} />
    <path d="M20 108L60 120L90 150L90 175L60 160Z" fill="#666" />
    <path d="M558 21L563 80M580 165L620 215L650 260L690 370L700 400" stroke="#777" strokeWidth="8" strokeDasharray="22 14" fill="none" />
    <path d="M690 355L725 345L730 370L705 375Z" fill="#a6d3e0" />
    <path d="M640 650L665 625L690 645L680 675L655 682Z" fill="#98f0c8" stroke="#fff" strokeWidth="4" />
    <Dots d="M380 105L400 90L460 95L470 60L580 45M530 320L550 400L600 490L660 480L690 420M575 320L580 370L600 440L640 420M225 405L265 400V425L230 420ZM135 710L210 625V700ZM25 745H250M55 765L240 760M25 780H130M680 300V250H620M535 255L575 250V310M730 170L765 185L740 235M690 330L715 325M230 740L285 740L270 789" />
    <Stations at={[[573, 141], [645, 245], [713, 450], [600, 606]]} />
    <Name x={449} y={127} w={149}>Wapping</Name>
    <Name x={689} y={270} w={140}>Rotherhi</Name>
    <Name x={340} y={364} w={212}>Bermondsey</Name>
    <Name x={16} y={557} w={30}>th</Name>
    <Name x={-15} y={484} w={30}>w</Name>
    <Name x={183} y={140} w={175} s={25} fill="#5a75b8" italic>River Thames</Name>
    <Name x={305} y={164} w={172} s={25} fill="#5a75b8" italic transform="rotate(20 305 164)">River Thames</Name>
    <Name x={18} y={276} w={112} s={24} transform="rotate(28 18 276)">Long Lane</Name>
    <Name x={702} y={182} w={175} s={24} transform="rotate(-86 702 182)">Rotherhithe Tu</Name>
    <Shield x={55} y={350} w={99} bg="#f6d3cb" edge="#d9a79e" ink="#7a2b20">A100</Shield>
    <Shield x={343} y={668} w={117} bg="#f3e4cf" edge="#cfb590" ink="#6b4a1c">A2208</Shield>
    <Shield x={26} y={677} w={98} bg="#e4eed5" edge="#b5c79c" ink="#46571f">B214</Shield>
  </Tile>
);

const KensingtonTile = () => (
  <Tile box="18 24 768 768" className="left-[-148px] top-[304px]">
    <Blocks seed={909} angle={-27} />
    <path d="M560 24H786V225L620 215L570 195L610 120Z" fill="#a8e8a8" />
    <path d="M545 24H600L625 130L570 150Z" fill="#a8ffc4" /><path d="M600 24L640 60L625 110ZM650 150H786V220H640Z" fill="#9fdf9f" />
    <ellipse cx="650" cy="105" rx="22" ry="20" fill="#a6d3e0" />
    <path d="M490 60L560 50L600 180L540 190Z" fill="#efebe4" />
    <path d="M300 90L345 190L325 225L245 205L232 160Z" fill="#9ee09e" /><path d="M285 215L355 205L370 270L275 235Z" fill="#aaffcf" />
    <path d="M18 160L60 165L90 205L18 200ZM150 340L215 350L200 385L130 400ZM18 40L60 90L40 110H18Z" fill="#ffd0d0" />
    <path d="M35 590L140 550L145 600L60 620L42 610Z" fill="#a2d9b2" />
    <path d="M150 590L190 585L185 645L140 635ZM210 690L250 680L240 715L205 710Z" fill="#a8f5cc" />
    <path d="M460 600L490 590L620 740L600 760L550 785L450 610Z" fill="#a0d8b0" />
    <path d="M370 555L430 545L440 600L400 640L370 600ZM450 650L500 690L490 700L450 705ZM340 590L380 560V600Z" fill="#c2c8aa" />
    <path d="M320 590L370 600L430 650L390 680L330 640ZM290 460H340L350 520L310 520Z" fill="#ffd2d2" />
    <path d="M250 535L320 520L330 590L290 560Z" fill="#ecd4e6" />
    <path d="M720 280H786V330L725 325ZM18 400H60L80 440L18 450Z" fill="#f8fbc4" />
    <path d="M315 520L345 515L375 590L340 580Z" fill="#888" />
    <path d="M370 480L440 500L400 540Q360 525 370 480Z" fill="#a8ffd0" />
    <Roads kind="white" lines={["M375 24L400 130L470 160M230 24L250 110L215 130M100 100Q120 80 140 105L130 200M455 270L500 250L560 380M560 230V330L580 450M690 220L730 400L740 490M650 330L786 320M18 330L130 320L180 380M240 300L330 380M600 540L650 640L720 690M490 480L620 690M300 560L320 660L240 620M150 480L60 480M18 220L70 205"]} />
    <Roads kind="yellow" lines={["M470 24L500 60L505 110L480 120M500 60L450 70M385 290L400 340L420 400M640 225L655 370L640 400M165 410L225 470L250 550L295 610L320 690L370 789M720 620L786 700"]} />
    <Roads kind="orange" lines={["M18 155L60 145L130 125L320 50L390 30L420 24M448 24L460 100L515 190L520 210M250 372L320 340L470 250L520 215L560 200L620 208L680 228H786", "M18 460L70 458L200 385L260 370", "M130 750L290 690L480 605L520 570L620 525L690 530L786 465M786 570L600 740L580 789M786 710L690 789M30 750L45 789M110 760L150 780L200 789"]} />
    <path d="M18 545L160 548L260 525L300 515" fill="none" stroke="#8c8c8c" strokeWidth="10" />
    <path d="M490 240L550 320L570 400M440 540L540 430L640 420L700 440" fill="none" stroke="#999" strokeWidth="8" strokeDasharray="60 12" />
    <Rails w={11} lines={["M50 110L75 170L130 260L220 375L290 440L320 520L370 590L450 645L500 700L550 789"]} />
    <Roads kind="red" lines={["M30 24L50 100L75 145L195 275L240 280L280 330L330 405L370 412L425 390L440 420M195 275L270 365L320 430L350 475L500 600L610 700L650 789", "M18 520L60 530L200 532L330 500L350 475L445 420L560 418L786 398", "M440 420L470 480L520 525L560 640L680 789", "M770 789L786 775"]} />
    <circle cx="70" cy="138" r="16" fill="#ffa797" />
    <path d="M715 768L760 740L768 712L786 705" fill="none" stroke="#7a6cf0" strokeWidth="9" />
    <Dots d="M300 60L345 180L385 285M568 150L620 140L700 135L786 155M470 612L550 735L600 740M78 95V130" />
    <path d="M600 50L640 230L720 240V330L786 320" fill="none" stroke="#c9a0c0" strokeWidth="4" strokeDasharray="10 7" />
    <Name x={15} y={109} w={48}>d's</Name>
    <Name x={275} y={311} w={207}>Kensington</Name>
    <Name x={31} y={394} w={100}>Green</Name>
    <Name x={508} y={407} w={276}>South Kensingto</Name>
    <Name x={14} y={505} w={66} s={38}>nith</Name>
    <Name x={351} y={509} w={190}>Earl's Court</Name>
    <Name x={657} y={512} w={128}>Brompt</Name>
    <Name x={324} y={803} w={250}>Walham Green</Name>
    <Name x={168} y={806} w={20}>P</Name>
    <Name x={631} y={76} w={147} s={29} fill="#13a05c" italic>Kensington</Name>
    <Name x={650} y={111} w={111} s={29} fill="#13a05c" italic>Gardens</Name>
    <Name x={31} y={24} w={52} s={24} transform="rotate(82 31 24)">oute</Name>
    <Shield x={16} y={713} w={117} bg="#f3e4cf" edge="#cfb590" ink="#6b4a1c">A3218</Shield>
  </Tile>
);

/* ---------- controls ---------- */

function Section({ title, info, open, className, children }: { title: string; info?: boolean; open?: boolean; className: string; children: React.ReactNode }) {
  return (
    <section className={`flex shrink-0 flex-col rounded bg-white px-[15px] ${className}`}>
      <div className="flex h-[43px] shrink-0 items-start justify-between border-b border-[#cfd8dc] pt-[14px]">
        <div className="flex items-center gap-[4px] text-base text-[#333]">
          {title}
          {info && <Icon name="info" size={16} className="text-[#b3b3b3]" />}
        </div>
        {open && (
          <svg width="14" height="9" viewBox="0 0 14 9" className="mr-px mt-[5px]">
            <path d="M1.2 7.4L7 1.7L12.8 7.4" fill="none" stroke="#00a7cf" strokeWidth="1.9" />
          </svg>
        )}
      </div>
      <div className="flex flex-col gap-[14px] pl-[15px] pt-4">{children}</div>
    </section>
  );
}

const Field = ({ label, children }: { label: string; children: React.ReactNode }) => (
  <div className="flex flex-col items-start">
    <span className="h-4 text-xs leading-4 text-[#333]">{label}</span>
    {children}
  </div>
);

function Select({ children, clear, className = "w-full" }: { children: React.ReactNode; clear?: boolean; className?: string }) {
  return (
    <div className={`flex h-[30px] items-center justify-between rounded border border-[#ccc] bg-white pr-[11px] text-sm text-[#333] ${className}`}>
      {children}
      <span className="flex items-center gap-[12px]">
        {clear && (
          <svg width="7" height="7" viewBox="0 0 7 7"><path d="M0.8 0.5L6.2 6.5M6.2 0.5L0.8 6.5" stroke="#ccc" strokeWidth="1.1" /></svg>
        )}
        <Arrow />
      </span>
    </div>
  );
}

const Chip = ({ children }: { children: React.ReactNode }) => (
  <span className="flex h-[22px] items-center rounded-sm bg-[#e6e6e6] pl-[3px] pr-[5px] text-xs text-[#333]">{children}</span>
);

const Cross = ({ className }: { className: string }) => (
  <svg width="8" height="9" viewBox="0 0 8 9" className={className}>
    <path d="M1 1.2L7 7.8M7 1.2L1 7.8" stroke="#222" strokeWidth="1.9" />
  </svg>
);

const GrayTag = ({ children }: { children: React.ReactNode }) => (
  <span className="flex h-[21px] items-center rounded bg-[#879399] px-[8.4px] text-sm text-white">{children}</span>
);

const SCHEME = ["#00a7cf", "#4f3d88", "#00d891", "#ff7043", "#6b6b6b", "#f2055c", "#ffd814", "#bb21b8", "#00d9ce", "#a8937a", "#80d3e7", "#a69dc4", "#96ecc5", "#ffbba2", "#b3b3b3", "#ff8fa9", "#fbf089", "#dc9bdc", "#8cece7", "#d3c6ba"];

const NavItem = ({ icon, label, caret, className }: { icon?: React.ReactNode; label: string; caret?: boolean; className: string }) => (
  <div className={`flex shrink-0 items-center ${className}`}>
    {icon}
    <span>{label}</span>
    {caret && <Caret className="ml-[7px] mt-[4px] text-[#879399]" />}
  </div>
);

export default function App() {
  return (
    <div className="flex h-[932px] w-[1839px] flex-col overflow-hidden bg-[#f5f5f5] font-['Liberation_Sans',Arial,sans-serif] text-[#333]">
      <header className="flex h-[55px] shrink-0 items-start bg-white text-sm leading-5">
        <div className="w-[160px] shrink-0 pl-[8.5px] pt-[10px]"><Logo /></div>
        <nav className="flex h-[52px] flex-1 items-center">
          <NavItem className="w-[115px]" label="Security" caret icon={<Icon name="cogs" size={14} w={1920} className="mr-[8px]" />} />
          <NavItem className="w-[92.5px]" label="Manage" caret />
          <NavItem className="w-[114.5px]" label="Sources" caret icon={<Icon name="database" size={14} w={1664} className="mr-[7.5px]" />} />
          <NavItem className="w-[98px]" label="Charts" icon={<Icon name="chart" size={14} w={2048} className="mr-[9px]" />} />
          <NavItem className="w-[130px]" label="Dashboards" icon={<Icon name="gauge" size={14.5} className="mr-[9.5px]" />} />
          <NavItem className="w-[110px]" label="SQL Lab" caret icon={<Icon name="flask" size={14} className="mr-[6.5px]" />} />
        </nav>
        <div className="mt-[11px] flex h-[30px] w-[63px] items-center justify-center gap-[2px] rounded bg-[#00a7cf] text-xs text-white">
          <Icon name="plus" size={11.5} className="-mt-px" />
          <span className="-mt-px">NEW</span>
        </div>
        <div className="flex h-[51px] w-[141px] items-center pl-[46px]">
          <Flag />
          <Caret className="ml-[12px] mt-[4px] text-[#879399]" />
          <Icon name="user" size={14} className="ml-[23px]" />
          <Caret className="ml-[10px] mt-[4px] text-[#879399]" />
        </div>
      </header>

      <div className="flex min-h-0 flex-1">
        <aside className="flex w-[604px] shrink-0 flex-col pl-[6px] pt-[19px]">
          <div className="flex h-[30px] shrink-0 items-center">
            <div className="flex h-[30px] w-[199px] rounded border border-[#b3b3b3] bg-white text-xs text-[#484848]">
              <div className="flex flex-1 items-center justify-center border-r border-[#b3b3b3] pr-[2px]">
                <Icon name="bolt" size={12} />RUN
              </div>
              <div className="flex flex-1 items-center justify-center gap-[2.5px]">
                <Icon name="plusCircle" size={12} />SAVE
              </div>
            </div>
            <div className="pl-[5px]"><Keyboard /></div>
          </div>

          <div className="mt-[19px] flex min-h-0 flex-1">
            <div className="flex w-[583px] shrink-0 flex-col overflow-hidden">
              <div className="flex h-[43px] shrink-0">
                <div className="flex w-[62px] items-center justify-center rounded-t-[3px] border-x border-t-[3px] border-x-[#cfd8dc] border-t-[#00a7cf] bg-white pb-[2px] text-sm font-bold text-[#484848]">Data</div>
                <div className="flex-1 border-b border-[#cfd8dc]" />
              </div>

              <Section title="Datasource & Chart Type" open className="h-[178px]">
                <Field label="Datasource">
                  <div className="flex h-[27px]">
                    <div className="flex w-[187px] items-center justify-between rounded bg-[#879399] pl-[8px] pr-[6px] text-xs text-white">
                      WB_HEALTH_POPULATION
                      <Caret className="mt-[3px]" />
                    </div>
                    <svg width="13" height="13" viewBox="0 0 13 13" className="ml-[10px] mt-[4.5px]">
                      <rect x="0.3" y="0.3" width="12.4" height="12.4" rx="2.2" fill="#00859f" />
                      <path d="M6.5 2.3V10.7M2.3 6.5H10.7" stroke="#fff" strokeWidth="2.2" />
                    </svg>
                  </div>
                </Field>
                <Field label="Visualization Type"><GrayTag>Treemap</GrayTag></Field>
              </Section>

              <Section title="Time" info open className="h-[170px]">
                <Field label="Time Column"><Select><span className="pl-[10.5px]">year</span></Select></Field>
                <Field label="Time Range"><GrayTag>1960-01-01 (unknown) : now (inclusive)</GrayTag></Field>
              </Section>

              <Section title="Query" open className="h-[299px]">
                <Field label="Metrics">
                  <Select>
                    <span className="pl-[3px]">
                      <Chip>
                        sum__SP_POP_TOTL
                        <FaRegQuestionCircle size={11} className="ml-[3px] text-[#b3b3b3]" />
                        <Cross className="ml-[9.5px] mr-px" />
                      </Chip>
                    </span>
                  </Select>
                </Field>
                <Field label="Filters"><Select><span className="pl-[10.5px] text-[#888]">choose a column or metric</span></Select></Field>
                <Field label="Group by">
                  <Select clear>
                    <span className="flex gap-[3px] pl-[3px]">
                      <Chip>region<Cross className="ml-[15px] mr-px" /></Chip>
                      <Chip>country_code<Cross className="ml-[14px] mr-px" /></Chip>
                    </span>
                  </Select>
                </Field>
                <Field label="Row limit"><Select clear><span className="pl-[10.5px]">50000</span></Select></Field>
              </Section>

              <Section title="Chart Options" open className="h-[178px]">
                <Field label="Color Scheme">
                  <Select className="w-[259px]">
                    <span className="flex gap-[1.85px] pl-[12px]">
                      {SCHEME.map((c) => <span key={c} className="h-[10px] w-[6px]" style={{ backgroundColor: c }} />)}
                    </span>
                  </Select>
                </Field>
              </Section>
            </div>

            <div className="flex w-[15px] flex-col items-center bg-[#f1f1f1]">
              <svg width="15" height="15" viewBox="0 0 15 15" className="shrink-0"><path d="M4 10L7.5 6L11 10Z" fill="#a3a3a3" /></svg>
              <div className="h-[660px] w-[11px] shrink-0 bg-[#c1c1c1]" />
            </div>
          </div>
        </aside>

        <main className="relative ml-[20px] mt-[19px] flex flex-1 flex-col rounded-t bg-white pl-[15px]">
          <div className="flex h-[58px] shrink-0 items-start justify-between pr-[16px]">
            <div className="flex items-center pt-[14px]">
              <h1 className="text-2xl leading-9">Treemap</h1>
              <Icon name="star" size={14} className="ml-[6.5px] mt-[6px]" />
              <Icon name="edit" size={14} className="ml-[6px] mt-[6px]" />
              <span className="ml-[5.5px] mt-[6px] flex h-[20px] w-[52px] items-center justify-center rounded bg-[#ff7043] pt-px text-xs text-white">Altered</span>
            </div>
            <div className="flex items-center pt-[15px]">
              <span className="mt-[4px] flex h-4 w-[52px] items-center justify-center rounded bg-[#879399] pt-px text-[10.3px] text-white">214 rows</span>
              <span className="ml-[5px] mt-[4px] flex h-4 w-[65px] items-center justify-center rounded bg-[#00d68f] pt-px text-[10.3px] text-white">00:00:00.32</span>
              <div className="ml-[5px] flex h-[30px] divide-x divide-[#b3b3b3] rounded border border-[#b3b3b3] bg-white text-xs text-[#484848]">
                <span className="flex w-[36px] items-center justify-center pr-[3px]"><Icon name="link" size={12} /></span>
                <span className="flex w-[37px] items-center justify-center pr-[3px]"><Icon name="code" size={11.5} w={2048} /></span>
                <span className="flex w-[70px] items-center gap-[2.5px] pl-[8.5px]"><FileIcon code />.JSON</span>
                <span className="flex w-[62px] items-center gap-[2.5px] pl-[8.5px]"><FileIcon />.CSV</span>
                <span className="flex w-[34px] items-center justify-center pr-[3px]">
                  <svg width="11" height="10" viewBox="0 0 11 10"><path d="M0 1.2H11M0 5H11M0 8.8H11" stroke="#484848" strokeWidth="1.7" /></svg>
                </span>
              </div>
            </div>
          </div>

          <LambethTile />
          <WestminsterTile />
          <BermondseyTile />
          <KensingtonTile />

          <div className="mt-[518px] text-sm leading-[19px]">
            <div className="text-[#00859f]">+−</div>
            <div><span className="text-[#00859f]">Leaflet</span> | © <span className="text-[#00859f]">OpenStreetMap</span> contributors</div>
          </div>

          <svg width="41" height="41" viewBox="0 0 41 41" className="absolute left-[596px] top-[554px]">
            <path d="M0.5 0.5H40.5V40.5H0.5ZM24.5 0.5V40.5" fill="none" stroke="#c0c0c0" />
            <path d="M2.5 2.5H13L17.5 7V9L9 17.5H2.5Z" fill="#c5d3f6" stroke="#999" />
            <path d="M13 2.5V7H17.5" fill="#fff" stroke="#999" />
            <path d="M4 8Q4 6 6 6.3Q7 4.5 8.5 6Q10 6.3 9.5 8Z" fill="#fff" />
            <path d="M3 16.5Q7 10.5 12 11.5L8 17H3ZM13 17.5L17.5 12.5V17.5Z" fill="#18b13c" />
            <path d="M8.5 18L18 8.5V11.5L11.5 18Z" fill="#fff" />
          </svg>
        </main>
      </div>
    </div>
  );
}
